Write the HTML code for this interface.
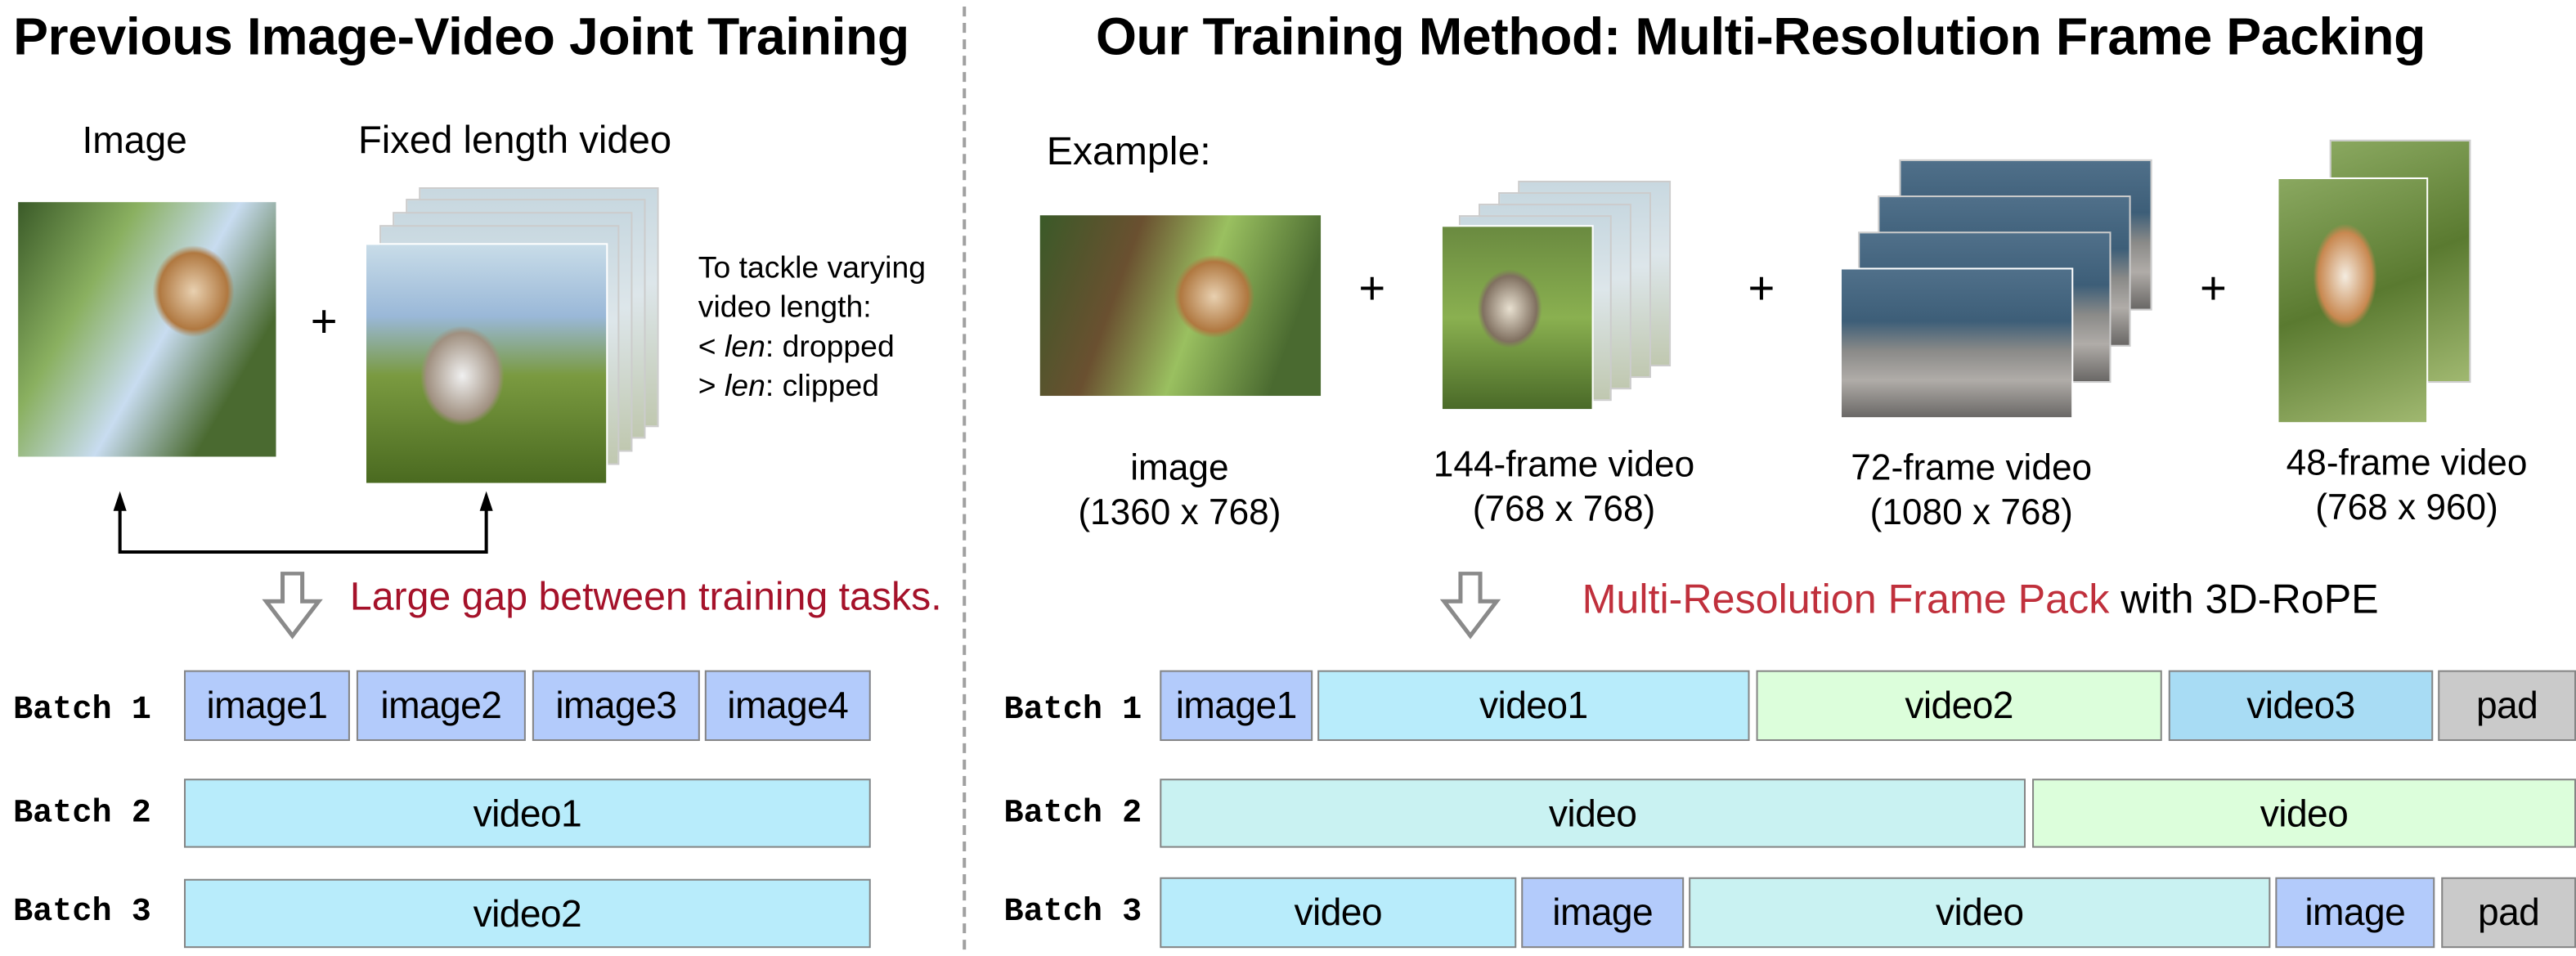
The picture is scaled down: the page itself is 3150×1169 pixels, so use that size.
<!DOCTYPE html>
<html><head><meta charset="utf-8"><style>
html,body{margin:0;padding:0;background:#fff;width:3150px;height:1168px;overflow:hidden}
#s{position:absolute;left:0;top:0;width:1568px;height:582px;transform:scale(2.00893);transform-origin:0 0;font-family:"Liberation Sans",Arial,sans-serif;color:#000}
.a{position:absolute}
.t{position:absolute;font-weight:bold;font-size:32px;white-space:nowrap;letter-spacing:-0.2px}
.l{position:absolute;font-size:22px;white-space:nowrap}
.b{position:absolute;box-sizing:border-box;border:1.5px solid #858585;font-size:23px;display:flex;align-items:center;justify-content:center;letter-spacing:-0.3px}
.mono{position:absolute;font-family:"Liberation Mono",monospace;font-size:20px;font-weight:bold;white-space:nowrap}
.i{background:#b3cbfb}.v{background:#b8ecfb}.g{background:#dcfedb}.v3{background:#a8dcf4}.p{background:#cacaca}.c{background:#c9f2f2}
.ph{position:absolute;border:1px solid #fff;box-sizing:border-box}
.cat{background:radial-gradient(ellipse 30% 35% at 60% 45%,#e8d8c0,#b08050 60%,transparent 70%),linear-gradient(135deg,#5d7a3a,#a8c070 40%,#6b8a40 70%,#3d5a20)}
.sky{background:radial-gradient(ellipse 25% 30% at 40% 55%,#f0f0f0,#a09080 60%,transparent 70%),linear-gradient(180deg,#c8dce8 0%,#9ab8d8 30%,#7a9a40 55%,#4a6a20 100%)}
.sea{background:linear-gradient(180deg,#50708a 0%,#3d5e78 35%,#8a8a88 55%,#b0aca8 75%,#6a6866 100%)}
.grass{background:radial-gradient(ellipse 30% 30% at 45% 40%,#f4ece0,#c88850 60%,transparent 72%),linear-gradient(160deg,#8aa860,#5a7a30 50%,#a0b870)}
.sk2{background:linear-gradient(180deg,#c8d8e0,#dde6ea 40%,#c0c8b0)}
</style></head><body><div id="s">
<div class="t" style="left:8px;top:4px">Previous Image-Video Joint Training</div>
<div class="t" style="left:667px;top:4px">Our Training Method: Multi-Resolution Frame Packing</div>
<div class="a" style="left:586px;top:4px;height:574px;border-left:2px dashed #a0a0a0"></div>

<div class="l" style="left:50px;top:72px;font-size:23px">Image</div>
<div class="l" style="left:218px;top:72px;font-size:23.5px">Fixed length video</div>
<div class="ph cat" style="left:10px;top:122px;width:159px;height:157px;background:radial-gradient(ellipse 22% 25% at 68% 35%,#e8d0b0,#b07840 60%,transparent 72%),linear-gradient(120deg,#3a5a28,#8ab060 30%,#c8dcf0 55%,#4a6a30 80%)"></div>
<div class="l" style="left:189px;top:180px;font-size:28px">+</div>
<div class="ph sk2" style="left:255px;top:114px;width:146px;height:146px;border-color:#ccc"></div>
<div class="ph sk2" style="left:247px;top:121px;width:146px;height:146px;border-color:#ccc"></div>
<div class="ph sk2" style="left:239px;top:129px;width:146px;height:146px;border-color:#ccc"></div>
<div class="ph sk2" style="left:231px;top:137px;width:146px;height:146px;border-color:#ccc"></div>
<div class="ph sky" style="left:222px;top:148px;width:148px;height:147px"></div>
<div class="l" style="left:425px;top:151px;font-size:18.6px;line-height:24px">To tackle varying<br>video length:<br>&lt; <i>len</i>: dropped<br>&gt; <i>len</i>: clipped</div>

<svg class="a" style="left:0;top:295px" width="400" height="50">
<path d="M73 10V41H296V10" fill="none" stroke="#000" stroke-width="2"/>
<path d="M69 16L73 4L77 16Z M292 16L296 4L300 16Z" fill="#000"/>
</svg>
<svg class="a" style="left:155px;top:348px" width="50" height="45"><path d="M17 1H29V18H39L23 39L7 18H17Z" fill="#fff" stroke="#8a8a8a" stroke-width="2.5" stroke-linejoin="miter"/></svg>
<div class="l" style="left:213px;top:350px;font-size:24px;color:#a5122a">Large gap between training tasks.</div>

<div class="mono" style="left:8px;top:421px">Batch 1</div>
<div class="mono" style="left:8px;top:484px">Batch 2</div>
<div class="mono" style="left:8px;top:544px">Batch 3</div>
<div class="b i" style="left:112px;top:408px;width:101px;height:43px">image1</div>
<div class="b i" style="left:217px;top:408px;width:103px;height:43px">image2</div>
<div class="b i" style="left:324px;top:408px;width:102px;height:43px">image3</div>
<div class="b i" style="left:429px;top:408px;width:101px;height:43px">image4</div>
<div class="b v" style="left:112px;top:474px;width:418px;height:42px">video1</div>
<div class="b v" style="left:112px;top:535px;width:418px;height:42px">video2</div>

<div class="l" style="left:637px;top:79px;font-size:24px">Example:</div>
<div class="ph cat" style="left:632px;top:130px;width:173px;height:112px;background:radial-gradient(ellipse 20% 32% at 62% 45%,#e8d0b0,#b07840 60%,transparent 72%),linear-gradient(110deg,#3a5a28,#6a5030 30%,#9ac060 55%,#4a6a30 85%)"></div>
<div class="l" style="left:827px;top:160px;font-size:28px">+</div>
<div class="ph sk2" style="left:924px;top:110px;width:93px;height:113px;border-color:#ccc"></div>
<div class="ph sk2" style="left:912px;top:117px;width:93px;height:113px;border-color:#ccc"></div>
<div class="ph sk2" style="left:900px;top:124px;width:93px;height:113px;border-color:#ccc"></div>
<div class="ph sk2" style="left:888px;top:131px;width:93px;height:113px;border-color:#ccc"></div>
<div class="ph grass" style="left:877px;top:137px;width:93px;height:113px;background:radial-gradient(ellipse 30% 30% at 45% 45%,#e8e0d0,#807060 60%,transparent 72%),linear-gradient(180deg,#6a8a40,#8ab050 50%,#4a6a28)"></div>
<div class="l" style="left:1064px;top:160px;font-size:28px">+</div>
<div class="ph sea" style="left:1156px;top:97px;width:154px;height:92px;border-color:#ccc"></div>
<div class="ph sea" style="left:1143px;top:119px;width:154px;height:92px;border-color:#ccc"></div>
<div class="ph sea" style="left:1131px;top:141px;width:154px;height:92px;border-color:#ccc"></div>
<div class="ph sea" style="left:1120px;top:163px;width:142px;height:92px"></div>
<div class="l" style="left:1339px;top:160px;font-size:28px">+</div>
<div class="ph grass" style="left:1418px;top:85px;width:86px;height:148px;border-color:#ccc"></div>
<div class="ph grass" style="left:1386px;top:108px;width:92px;height:150px"></div>

<div class="l" style="left:618px;top:271px;width:200px;text-align:center;line-height:27px">image<br>(1360 x 768)</div>
<div class="l" style="left:852px;top:269px;width:200px;text-align:center;line-height:27px">144-frame video<br>(768 x 768)</div>
<div class="l" style="left:1100px;top:271px;width:200px;text-align:center;line-height:27px">72-frame video<br>(1080 x 768)</div>
<div class="l" style="left:1365px;top:268px;width:200px;text-align:center;line-height:27px">48-frame video<br>(768 x 960)</div>

<svg class="a" style="left:872px;top:348px" width="50" height="45"><path d="M17 1H29V18H39L23 39L7 18H17Z" fill="#fff" stroke="#8a8a8a" stroke-width="2.5"/></svg>
<div class="l" style="left:963px;top:351px;font-size:25px"><span style="color:#c0303c">Multi-Resolution Frame Pack</span> with 3D-RoPE</div>

<div class="mono" style="left:611px;top:421px">Batch 1</div>
<div class="mono" style="left:611px;top:484px">Batch 2</div>
<div class="mono" style="left:611px;top:544px">Batch 3</div>
<div class="b i" style="left:706px;top:408px;width:93px;height:43px">image1</div>
<div class="b v" style="left:802px;top:408px;width:263px;height:43px">video1</div>
<div class="b g" style="left:1069px;top:408px;width:247px;height:43px">video2</div>
<div class="b v3" style="left:1320px;top:408px;width:161px;height:43px">video3</div>
<div class="b p" style="left:1484px;top:408px;width:84px;height:43px">pad</div>
<div class="b c" style="left:706px;top:474px;width:527px;height:42px">video</div>
<div class="b g" style="left:1237px;top:474px;width:331px;height:42px">video</div>
<div class="b v" style="left:706px;top:534px;width:217px;height:43px">video</div>
<div class="b i" style="left:926px;top:534px;width:99px;height:43px">image</div>
<div class="b c" style="left:1028px;top:534px;width:354px;height:43px">video</div>
<div class="b i" style="left:1385px;top:534px;width:97px;height:43px">image</div>
<div class="b p" style="left:1486px;top:534px;width:82px;height:43px">pad</div>
</div></body></html>
